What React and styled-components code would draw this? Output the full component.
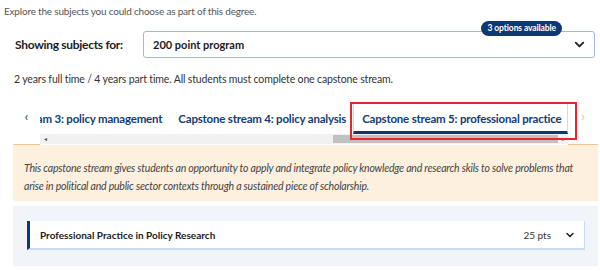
import React, { useLayoutEffect, useRef, useState } from 'react';
import styled, { createGlobalStyle } from 'styled-components';
import { ChevronDown } from 'lucide-react';

const tabs = [
    'Capstone stream 1: social policy and program evaluation',
    'Capstone stream 2: international and comparative policy',
    'Capstone stream 3: policy management',
    'Capstone stream 4: policy analysis',
    'Capstone stream 5: professional practice',
];

const ARROW = 10;

export default function App() {
    const viewportRef = useRef(null);
    const [thumb, setThumb] = useState({ left: ARROW, width: 0 });

    // scroll the strip so the active (last) tab is in view, then size the scroll thumb
    useLayoutEffect(() => {
        const el = viewportRef.current;
        if (!el) return;
        el.scrollLeft = el.scrollWidth - el.clientWidth;
        const inner = el.clientWidth - ARROW * 2;
        setThumb({
            left: ARROW + (inner * el.scrollLeft) / el.scrollWidth,
            width: (inner * el.clientWidth) / el.scrollWidth,
        });
    }, []);

    return (
        <Page>
            <GlobalStyle />
            <Intro>Explore the subjects you could choose as part of this degree.</Intro>
            <Body>
                <SelectRow>
                    <Label>Showing subjects for:</Label>
                    <SelectBox>
                        <SelectValue>200 point program</SelectValue>
                        <ChevronDown size={15} strokeWidth={3} color="#222" />
                        <Badge>3 options available</Badge>
                    </SelectBox>
                </SelectRow>

                <Note>2 years full time / 4 years part time. All students must complete one capstone stream.</Note>

                <TabRow>
                    <NavCell>‹</NavCell>
                    <TabArea>
                        <TabViewport ref={viewportRef}>
                            <TabStrip>
                                {tabs.map((t, i) => (
                                    <Tab key={t} $active={i === tabs.length - 1}>{t}</Tab>
                                ))}
                            </TabStrip>
                        </TabViewport>
                        <ScrollTrack>
                            <ScrollArrow>◂</ScrollArrow>
                            <ScrollThumb style={{ left: thumb.left, width: thumb.width }} />
                            <ScrollArrow>▸</ScrollArrow>
                        </ScrollTrack>
                    </TabArea>
                    <NavCell $disabled>›</NavCell>
                    <Highlight />
                </TabRow>

                <Panel>
                    This capstone stream gives students an opportunity to apply and integrate policy knowledge and research skils to solve problems that
                    arise in political and public sector contexts through a sustained piece of scholarship.
                </Panel>

                <SubjectList>
                    <SubjectCard>
                        <SubjectTitle>Professional Practice in Policy Research</SubjectTitle>
                        <Points>25 pts</Points>
                        <ChevronDown size={12} strokeWidth={3} color="#222" />
                    </SubjectCard>
                </SubjectList>
            </Body>
        </Page>
    );
}

const GlobalStyle = createGlobalStyle`
  body {
    margin: 0;
    background: #fff;
    font-family: Lato, "Liberation Sans", sans-serif;
  }
`;

const Page = styled.div`
  width: 600px;
  box-sizing: border-box;
  padding: 3px 2px 0 4px;
`;

const Intro = styled.p`
  margin: 0;
  font-size: 10px;
  letter-spacing: -0.2px;
  line-height: 16px;
  color: #555;
`;

const Body = styled.div`
  padding-left: 9px;
`;

const SelectRow = styled.div`
  display: flex;
  align-items: center;
  margin-top: 12px;
`;

const Label = styled.span`
  flex: 0 0 130px;
  padding-left: 2px;
  box-sizing: border-box;
  white-space: nowrap;
  font-size: 12px;
  letter-spacing: -0.3px;
  font-weight: 700;
  color: #1c1c1c;
`;

const SelectBox = styled.div`
  position: relative;
  flex: 1;
  margin-right: 3px;
  height: 27px;
  box-sizing: border-box;
  border: 1px solid #9fb9de;
  border-radius: 3px;
  display: flex;
  align-items: center;
  justify-content: space-between;
  padding: 0 7px 0 9px;
`;

const SelectValue = styled.span`
  font-size: 11px;
  font-weight: 700;
  color: #1c1c1c;
`;

const Badge = styled.span`
  position: absolute;
  top: -11px;
  right: 32px;
  height: 15px;
  padding: 0 6px;
  border-radius: 8px;
  background: #0c3873;
  color: #fff;
  font-size: 8.5px;
  font-weight: 700;
  line-height: 15px;
  letter-spacing: -0.1px;
`;

const Note = styled.p`
  margin: 13px 0 0;
  padding-left: 1px;
  font-size: 10.5px;
  letter-spacing: -0.15px;
  line-height: 16px;
  color: #333;
`;

const TabRow = styled.div`
  position: relative;
  display: flex;
  height: 45px;
  margin-top: 13px;
`;

const NavCell = styled.div`
  flex: 0 0 ${p => (p.$disabled ? 30 : 27)}px;
  box-sizing: border-box;
  border-bottom: 1px solid #f3c58e;
  padding-top: 8px;
  text-align: center;
  font-size: 14px;
  line-height: 16px;
  color: ${p => (p.$disabled ? '#c4c4c4' : '#444')};
`;

const TabArea = styled.div`
  flex: 1;
  min-width: 0;
  display: flex;
  flex-direction: column;
  padding-top: 3px;
`;

const TabViewport = styled.div`
  overflow: hidden;
`;

const TabStrip = styled.div`
  display: flex;
  width: max-content;
`;

const Tab = styled.div`
  height: 31px;
  box-sizing: border-box;
  padding: 2px 6px 0 8px;
  display: flex;
  align-items: center;
  white-space: nowrap;
  font-size: 11.5px;
  letter-spacing: -0.2px;
  font-weight: 700;
  color: #143d73;
  border-left: 1px solid ${p => (p.$active ? '#c9daf1' : 'transparent')};
  border-right: 1px solid ${p => (p.$active ? '#c9daf1' : 'transparent')};
  border-bottom: 3px solid ${p => (p.$active ? '#0c3873' : 'transparent')};
`;

const ScrollTrack = styled.div`
  position: relative;
  height: 10px;
  background: #f1f1f1;
  display: flex;
  justify-content: space-between;
`;

const ScrollArrow = styled.span`
  width: ${ARROW}px;
  text-align: center;
  font-size: 6px;
  line-height: 10px;
  color: #505050;
`;

const ScrollThumb = styled.div`
  position: absolute;
  top: 1px;
  bottom: 1px;
  background: #c1c1c1;
`;

// red annotation box drawn over the active tab
const Highlight = styled.div`
  position: absolute;
  top: 2px;
  right: 21px;
  width: 227px;
  height: 38px;
  box-sizing: border-box;
  border: 2px solid #e5262c;
  pointer-events: none;
`;

const Panel = styled.p`
  margin: 0;
  background: #fdf0df;
  padding: 14px 14px 6px 11px;
  font-size: 10.5px;
  letter-spacing: -0.2px;
  font-style: italic;
  line-height: 18px;
  color: #444;
`;

const SubjectList = styled.div`
  margin-top: 5px;
  background: #f1f4f8;
  padding: 15px 13px 16px 14px;
`;

const SubjectCard = styled.div`
  display: flex;
  align-items: center;
  height: 29px;
  box-sizing: border-box;
  background: #fff;
  border-left: 3px solid #0c3873;
  border-right: 1px solid #c9daf1;
  border-bottom: 2px solid #c9daf1;
  padding: 0 8px 0 10px;
`;

const SubjectTitle = styled.span`
  flex: 1;
  font-size: 10px;
  font-weight: 700;
  color: #1c1c1c;
`;

const Points = styled.span`
  margin-right: 13px;
  font-size: 10px;
  color: #333;
`;
